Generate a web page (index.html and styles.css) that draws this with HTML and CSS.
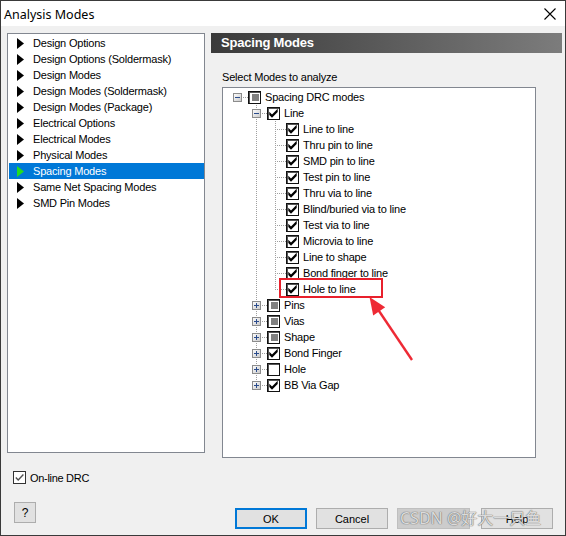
FILE: index.html
```html
<!DOCTYPE html>
<html>
<head>
<meta charset="utf-8">
<link rel="stylesheet" href="styles.css">
</head>
<body>
<div class="window">
  <div class="titlebar">
    <span class="title">Analysis Modes</span>
    <svg class="close" width="12" height="12" viewBox="0 0 12 12"><path d="M0.5 0.5 L11.5 11.5 M11.5 0.5 L0.5 11.5" stroke="#000" stroke-width="1.1" fill="none"/></svg>
  </div>
  <div class="content">
    <div class="main">
      <div class="left">
        <div class="item"><svg class="tri" width="7" height="11" viewBox="0 0 7 11"><polygon points="0,0 7,5.5 0,11"/></svg><span>Design Options</span></div>
        <div class="item"><svg class="tri" width="7" height="11" viewBox="0 0 7 11"><polygon points="0,0 7,5.5 0,11"/></svg><span>Design Options (Soldermask)</span></div>
        <div class="item"><svg class="tri" width="7" height="11" viewBox="0 0 7 11"><polygon points="0,0 7,5.5 0,11"/></svg><span>Design Modes</span></div>
        <div class="item"><svg class="tri" width="7" height="11" viewBox="0 0 7 11"><polygon points="0,0 7,5.5 0,11"/></svg><span>Design Modes (Soldermask)</span></div>
        <div class="item"><svg class="tri" width="7" height="11" viewBox="0 0 7 11"><polygon points="0,0 7,5.5 0,11"/></svg><span>Design Modes (Package)</span></div>
        <div class="item"><svg class="tri" width="7" height="11" viewBox="0 0 7 11"><polygon points="0,0 7,5.5 0,11"/></svg><span>Electrical Options</span></div>
        <div class="item"><svg class="tri" width="7" height="11" viewBox="0 0 7 11"><polygon points="0,0 7,5.5 0,11"/></svg><span>Electrical Modes</span></div>
        <div class="item"><svg class="tri" width="7" height="11" viewBox="0 0 7 11"><polygon points="0,0 7,5.5 0,11"/></svg><span>Physical Modes</span></div>
        <div class="item sel"><svg class="tri" width="7" height="11" viewBox="0 0 7 11"><polygon points="0,0 7,5.5 0,11"/></svg><span>Spacing Modes</span></div>
        <div class="item"><svg class="tri" width="7" height="11" viewBox="0 0 7 11"><polygon points="0,0 7,5.5 0,11"/></svg><span>Same Net Spacing Modes</span></div>
        <div class="item"><svg class="tri" width="7" height="11" viewBox="0 0 7 11"><polygon points="0,0 7,5.5 0,11"/></svg><span>SMD Pin Modes</span></div>
      </div>
      <div class="right">
        <div class="header">Spacing Modes</div>
        <div class="label">Select Modes to analyze</div>
        <div class="tree">
          <div class="row">
            <div class="c h"><svg class="exp" width="9" height="9" viewBox="0 0 9 9"><defs><linearGradient id="eg" x1="0" y1="0" x2="1" y2="1"><stop offset="0" stop-color="#ffffff"/><stop offset="1" stop-color="#c8c8c8"/></linearGradient></defs><rect x="0.5" y="0.5" width="8" height="8" fill="url(#eg)" stroke="#8c8c8c"/><path d="M2 4.5 H7" stroke="#2b4c8c" stroke-width="1"/></svg></div>
            <div class="cb ind"><i></i></div><span class="t">Spacing DRC modes</span>
          </div>
          <div class="row">
            <div class="g"></div>
            <div class="c v h"><svg class="exp" width="9" height="9" viewBox="0 0 9 9"><rect x="0.5" y="0.5" width="8" height="8" fill="url(#eg)" stroke="#8c8c8c"/><path d="M2 4.5 H7" stroke="#2b4c8c" stroke-width="1"/></svg></div>
            <div class="cb chk"><svg width="11" height="11" viewBox="0 0 11 11"><polygon points="1.3,3.8 1.3,7 4,9.7 9.7,4 9.7,0.8 4,6.5"/></svg></div><span class="t">Line</span>
          </div>
          <div class="row"><div class="g"></div><div class="g v"></div><div class="c v h"></div><div class="cb chk"><svg width="11" height="11" viewBox="0 0 11 11"><polygon points="1.3,3.8 1.3,7 4,9.7 9.7,4 9.7,0.8 4,6.5"/></svg></div><span class="t">Line to line</span></div>
          <div class="row"><div class="g"></div><div class="g v"></div><div class="c v h"></div><div class="cb chk"><svg width="11" height="11" viewBox="0 0 11 11"><polygon points="1.3,3.8 1.3,7 4,9.7 9.7,4 9.7,0.8 4,6.5"/></svg></div><span class="t">Thru pin to line</span></div>
          <div class="row"><div class="g"></div><div class="g v"></div><div class="c v h"></div><div class="cb chk"><svg width="11" height="11" viewBox="0 0 11 11"><polygon points="1.3,3.8 1.3,7 4,9.7 9.7,4 9.7,0.8 4,6.5"/></svg></div><span class="t">SMD pin to line</span></div>
          <div class="row"><div class="g"></div><div class="g v"></div><div class="c v h"></div><div class="cb chk"><svg width="11" height="11" viewBox="0 0 11 11"><polygon points="1.3,3.8 1.3,7 4,9.7 9.7,4 9.7,0.8 4,6.5"/></svg></div><span class="t">Test pin to line</span></div>
          <div class="row"><div class="g"></div><div class="g v"></div><div class="c v h"></div><div class="cb chk"><svg width="11" height="11" viewBox="0 0 11 11"><polygon points="1.3,3.8 1.3,7 4,9.7 9.7,4 9.7,0.8 4,6.5"/></svg></div><span class="t">Thru via to line</span></div>
          <div class="row"><div class="g"></div><div class="g v"></div><div class="c v h"></div><div class="cb chk"><svg width="11" height="11" viewBox="0 0 11 11"><polygon points="1.3,3.8 1.3,7 4,9.7 9.7,4 9.7,0.8 4,6.5"/></svg></div><span class="t">Blind/buried via to line</span></div>
          <div class="row"><div class="g"></div><div class="g v"></div><div class="c v h"></div><div class="cb chk"><svg width="11" height="11" viewBox="0 0 11 11"><polygon points="1.3,3.8 1.3,7 4,9.7 9.7,4 9.7,0.8 4,6.5"/></svg></div><span class="t">Test via to line</span></div>
          <div class="row"><div class="g"></div><div class="g v"></div><div class="c v h"></div><div class="cb chk"><svg width="11" height="11" viewBox="0 0 11 11"><polygon points="1.3,3.8 1.3,7 4,9.7 9.7,4 9.7,0.8 4,6.5"/></svg></div><span class="t">Microvia to line</span></div>
          <div class="row"><div class="g"></div><div class="g v"></div><div class="c v h"></div><div class="cb chk"><svg width="11" height="11" viewBox="0 0 11 11"><polygon points="1.3,3.8 1.3,7 4,9.7 9.7,4 9.7,0.8 4,6.5"/></svg></div><span class="t">Line to shape</span></div>
          <div class="row"><div class="g"></div><div class="g v"></div><div class="c v h"></div><div class="cb chk"><svg width="11" height="11" viewBox="0 0 11 11"><polygon points="1.3,3.8 1.3,7 4,9.7 9.7,4 9.7,0.8 4,6.5"/></svg></div><span class="t">Bond finger to line</span></div>
          <div class="row"><div class="g"></div><div class="g v"></div><div class="c v end h"></div><div class="cb chk"><svg width="11" height="11" viewBox="0 0 11 11"><polygon points="1.3,3.8 1.3,7 4,9.7 9.7,4 9.7,0.8 4,6.5"/></svg></div><span class="t">Hole to line</span></div>
          <div class="row"><div class="g"></div><div class="c v h"><svg class="exp" width="9" height="9" viewBox="0 0 9 9"><rect x="0.5" y="0.5" width="8" height="8" fill="url(#eg)" stroke="#8c8c8c"/><path d="M2 4.5 H7 M4.5 2 V7" stroke="#2b4c8c" stroke-width="1"/></svg></div><div class="cb ind"><i></i></div><span class="t">Pins</span></div>
          <div class="row"><div class="g"></div><div class="c v h"><svg class="exp" width="9" height="9" viewBox="0 0 9 9"><rect x="0.5" y="0.5" width="8" height="8" fill="url(#eg)" stroke="#8c8c8c"/><path d="M2 4.5 H7 M4.5 2 V7" stroke="#2b4c8c" stroke-width="1"/></svg></div><div class="cb ind"><i></i></div><span class="t">Vias</span></div>
          <div class="row"><div class="g"></div><div class="c v h"><svg class="exp" width="9" height="9" viewBox="0 0 9 9"><rect x="0.5" y="0.5" width="8" height="8" fill="url(#eg)" stroke="#8c8c8c"/><path d="M2 4.5 H7 M4.5 2 V7" stroke="#2b4c8c" stroke-width="1"/></svg></div><div class="cb ind"><i></i></div><span class="t">Shape</span></div>
          <div class="row"><div class="g"></div><div class="c v h"><svg class="exp" width="9" height="9" viewBox="0 0 9 9"><rect x="0.5" y="0.5" width="8" height="8" fill="url(#eg)" stroke="#8c8c8c"/><path d="M2 4.5 H7 M4.5 2 V7" stroke="#2b4c8c" stroke-width="1"/></svg></div><div class="cb chk"><svg width="11" height="11" viewBox="0 0 11 11"><polygon points="1.3,3.8 1.3,7 4,9.7 9.7,4 9.7,0.8 4,6.5"/></svg></div><span class="t">Bond Finger</span></div>
          <div class="row"><div class="g"></div><div class="c v h"><svg class="exp" width="9" height="9" viewBox="0 0 9 9"><rect x="0.5" y="0.5" width="8" height="8" fill="url(#eg)" stroke="#8c8c8c"/><path d="M2 4.5 H7 M4.5 2 V7" stroke="#2b4c8c" stroke-width="1"/></svg></div><div class="cb"></div><span class="t">Hole</span></div>
          <div class="row"><div class="g"></div><div class="c v end h"><svg class="exp" width="9" height="9" viewBox="0 0 9 9"><rect x="0.5" y="0.5" width="8" height="8" fill="url(#eg)" stroke="#8c8c8c"/><path d="M2 4.5 H7 M4.5 2 V7" stroke="#2b4c8c" stroke-width="1"/></svg></div><div class="cb chk"><svg width="11" height="11" viewBox="0 0 11 11"><polygon points="1.3,3.8 1.3,7 4,9.7 9.7,4 9.7,0.8 4,6.5"/></svg></div><span class="t">BB Via Gap</span></div>
        </div>
      </div>
    </div>
    <div class="bottom">
      <div class="leftcol">
        <div class="online"><div class="cb10"><svg width="11" height="11" viewBox="0 0 11 11"><polyline points="1.8,5.6 4.2,8 9.4,2.6" fill="none" stroke="#505050" stroke-width="1.4"/></svg></div><span>On-line DRC</span></div>
        <div class="qbtn">?</div>
      </div>
      <div class="buttons">
        <div class="btn def">OK</div>
        <div class="btn">Cancel</div>
        <div class="btn dis"></div>
        <div class="btn help">Help</div>
      </div>
    </div>
  </div>
  <svg class="annot" width="566" height="536" viewBox="0 0 566 536">
    <rect x="280" y="279" width="102" height="18" fill="none" stroke="#e8202c" stroke-width="2"/>
    <line x1="412" y1="360" x2="377" y2="308" stroke="#ee2a35" stroke-width="2.4"/>
    <polygon points="369.5,297 373.2,315.5 385.2,307.3" fill="#ee2a35"/>
  </svg>
  <div class="watermark">CSDN @好大一只鱼</div>
</div>
</body>
</html>
```

FILE: styles.css
```css
html, body {
  margin: 0;
  padding: 0;
}
body {
  width: 566px;
  height: 536px;
  overflow: hidden;
  font-family: "Liberation Sans", Arial, sans-serif;
  font-size: 11px;
  letter-spacing: -0.2px;
  color: #000;
}
.window {
  position: relative;
  box-sizing: border-box;
  width: 566px;
  height: 536px;
  border: 1px solid #3a3a3a;
  background: #f0f0f0;
  display: flex;
  flex-direction: column;
}
.titlebar {
  height: 25px;
  background: #fff;
  display: flex;
  align-items: center;
  flex: none;
}
.title {
  font-family: "Noto Sans", "Liberation Sans", sans-serif;
  font-size: 12.5px;
  letter-spacing: 0;
  margin-left: 3px;
  padding-top: 1px;
}
.close {
  margin-left: auto;
  margin-right: 9px;
  margin-top: 1px;
}
.content {
  padding: 7px 3px 0 6px;
  flex: 1;
  display: flex;
  flex-direction: column;
}
.main {
  display: flex;
  height: 425px;
  flex: none;
}
.left {
  box-sizing: border-box;
  width: 198px;
  height: 420px;
  border: 1px solid #828790;
  background: #fff;
  padding: 1px 0 0 1px;
  flex: none;
}
.item {
  height: 16px;
  display: flex;
  align-items: center;
  padding-left: 8px;
  white-space: nowrap;
}
.item .tri {
  fill: #000;
  margin-right: 9px;
  flex: none;
}
.item.sel {
  background: #0078d7;
  color: #fff;
}
.item.sel .tri {
  fill: #22dd22;
}
.right {
  margin-left: 6px;
  flex: 1;
  display: flex;
  flex-direction: column;
}
.header {
  height: 20px;
  line-height: 20px;
  background: linear-gradient(to right, #3a3a3a, #7c7c7c);
  color: #fff;
  font-weight: bold;
  font-size: 13px;
  letter-spacing: -0.2px;
  padding-left: 10px;
}
.label {
  margin-top: 17px;
  margin-left: 11px;
  line-height: 14px;
  height: 14px;
}
.tree {
  box-sizing: border-box;
  margin-top: 3px;
  margin-left: 11px;
  width: 314px;
  height: 371px;
  border: 1px solid #828790;
  background: #fff;
  padding: 1px 0 0 6px;
}
.row {
  height: 16px;
  display: flex;
  align-items: center;
  white-space: nowrap;
}
.g, .c {
  position: relative;
  width: 19px;
  height: 16px;
  flex: none;
}
.v::before {
  content: "";
  position: absolute;
  left: 8px;
  top: 0;
  width: 1px;
  height: 16px;
  background: repeating-linear-gradient(to bottom, #a0a0a0 0 1px, transparent 1px 2px);
}
.v.end::before {
  height: 9px;
}
.h::after {
  content: "";
  position: absolute;
  left: 9px;
  top: 8px;
  width: 10px;
  height: 1px;
  background: repeating-linear-gradient(to right, transparent 0 1px, #a0a0a0 1px 2px);
}
.exp {
  position: absolute;
  left: 4px;
  top: 4px;
  z-index: 1;
}
.cb {
  box-sizing: border-box;
  width: 13px;
  height: 13px;
  border: 1px solid #111;
  box-shadow: inset 1px 1px 0 #555;
  background: #fff;
  display: flex;
  align-items: center;
  justify-content: center;
  flex: none;
}
.cb svg {
  fill: #000;
}
.cb.ind i {
  display: block;
  width: 7px;
  height: 7px;
  background: #808080;
  margin: 1px 0 0 1px;
}
.t {
  margin-left: 4px;
}
.bottom {
  display: flex;
  align-items: flex-start;
}
.leftcol {
  margin-left: 6px;
  margin-top: 13px;
  display: flex;
  flex-direction: column;
}
.online {
  display: flex;
  align-items: center;
  height: 13px;
}
.online span {
  margin-left: 4px;
  letter-spacing: -0.3px;
}
.cb10 {
  box-sizing: border-box;
  width: 13px;
  height: 13px;
  border: 1px solid #333;
  background: #fff;
  display: flex;
  align-items: center;
  justify-content: center;
}
.qbtn {
  box-sizing: border-box;
  margin-top: 18px;
  margin-left: 1px;
  width: 22px;
  height: 21px;
  border: 1px solid #adadad;
  background: #e1e1e1;
  display: flex;
  align-items: center;
  justify-content: center;
  font-size: 12px;
}
.buttons {
  margin-left: auto;
  margin-right: 9px;
  margin-top: 50px;
  display: flex;
  gap: 9px;
}
.btn {
  box-sizing: border-box;
  width: 72px;
  height: 21px;
  border: 1px solid #adadad;
  background: #e1e1e1;
  display: flex;
  align-items: center;
  justify-content: center;
  letter-spacing: 0;
}
.btn.def {
  border-color: #0078d7;
  box-shadow: inset 0 0 0 1px #0078d7;
}
.btn.dis {
  width: 73px;
  background: #cccccc;
  border-color: #bfbfbf;
}
.btn.help {
  margin-left: 2px;
}
.annot {
  position: absolute;
  left: -1px;
  top: -1px;
  pointer-events: none;
}
.watermark {
  position: absolute;
  left: 399px;
  top: 507px;
  font-family: "Noto Sans", "Noto Sans CJK SC", sans-serif;
  font-size: 16px;
  line-height: 20px;
  letter-spacing: 0;
  color: rgba(240, 240, 240, 0.85);
  text-shadow: 0 0 1px #6a6a6a, 0 0 1px #6a6a6a;
  white-space: nowrap;
}
```
